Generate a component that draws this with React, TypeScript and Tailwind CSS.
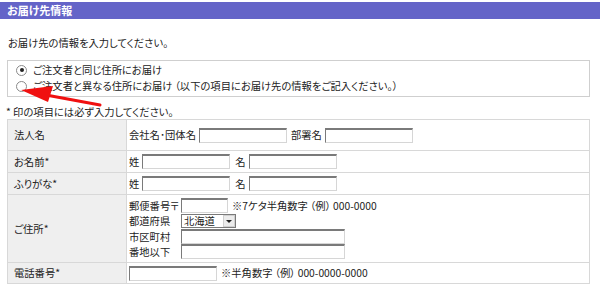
import React from "react";

const inputCls =
  "box-border h-[15px] border border-t-2 border-t-[#7a7a7a] border-l-[#7a7a7a] border-r-[#d6d6d6] border-b-[#d6d6d6] bg-white";

function Input({ w }: { w: string }) {
  return <span className={`${inputCls} inline-block shrink-0 ${w}`} />;
}

function Radio({ checked }: { checked?: boolean }) {
  return (
    <span className="relative inline-block w-[11px] h-[11px] rounded-full border border-[#8a8a8a] bg-white shrink-0">
      {checked && (
        <span className="absolute left-[2.5px] top-[2.5px] w-[4px] h-[4px] rounded-full bg-[#222]" />
      )}
    </span>
  );
}

export default function App() {
  return (
    <div className="relative w-[600px] h-[291px] bg-white overflow-hidden text-[10.3px] text-[#222] whitespace-nowrap [font-family:'Noto_Sans_CJK_JP','Noto_Sans',sans-serif] [font-feature-settings:'palt']">
      <div className="mt-[2px] h-[17px] bg-[#6464c8] pl-[7px] text-white font-bold text-[11px] leading-[17px]">
        お届け先情報
      </div>
      <p className="mt-[16px] ml-[8px] leading-[16px]">お届け先の情報を入力してください。</p>
      <div className="mt-[9px] ml-[7px] w-[583px] border border-[#cfcfcf] pt-[1px] pb-[2px] pl-[8px]">
        <div className="flex items-center gap-[6px] h-[16px]">
          <Radio checked />
          <span>ご注文者と同じ住所にお届け</span>
        </div>
        <div className="flex items-center gap-[6px] h-[16px]">
          <Radio />
          <span>ご注文者と異なる住所にお届け （以下の項目にお届け先の情報をご記入ください。）</span>
        </div>
      </div>
      <p className="mt-[8px] ml-[6px] leading-[14px]">* 印の項目には必ず入力してください。</p>
      <table className="ml-[7px] w-[583px] border-collapse">
        <tbody>
          <tr className="h-[31px]">
            <td className="w-[119px] border border-[#d8d8d8] bg-[#efefef] pl-[6px]">法人名</td>
            <td className="border border-[#d8d8d8] pl-[2px]">
              <div className="flex items-center gap-[3px]">
                <span>会社名･団体名</span>
                <Input w="w-[88px]" />
                <span className="ml-[1px]">部署名</span>
                <Input w="w-[88px]" />
              </div>
            </td>
          </tr>
          <tr className="h-[22px]">
            <td className="border border-[#d8d8d8] bg-[#efefef] pl-[6px]">お名前*</td>
            <td className="border border-[#d8d8d8] pl-[2px]">
              <div className="flex items-center gap-[3px]">
                <span>姓</span>
                <Input w="w-[88px]" />
                <span className="ml-[2px]">名</span>
                <Input w="w-[88px]" />
              </div>
            </td>
          </tr>
          <tr className="h-[22px]">
            <td className="border border-[#d8d8d8] bg-[#efefef] pl-[6px]">ふりがな*</td>
            <td className="border border-[#d8d8d8] pl-[2px]">
              <div className="flex items-center gap-[3px]">
                <span>姓</span>
                <Input w="w-[88px]" />
                <span className="ml-[2px]">名</span>
                <Input w="w-[88px]" />
              </div>
            </td>
          </tr>
          <tr className="h-[67px]">
            <td className="border border-[#d8d8d8] bg-[#efefef] pl-[6px]">ご住所*</td>
            <td className="border border-[#d8d8d8] pl-[2px] py-[3px]">
              <div className="flex items-center h-[15px]">
                <span className="w-[52px] shrink-0">郵便番号〒</span>
                <Input w="w-[47px]" />
                <span className="ml-[4px]">※7ケタ半角数字 （例） 000-0000</span>
              </div>
              <div className="flex items-center h-[16px]">
                <span className="w-[52px] shrink-0">都道府県</span>
                <span className="box-border flex items-center justify-between w-[55px] h-[14px] border border-[#7a7a7a] bg-white pl-[2px]">
                  <span className="leading-[12px]">北海道</span>
                  <span className="box-border flex items-center justify-center w-[12px] h-[12px] border border-[#d0d0d0] bg-[#ececec]">
                    <span className="w-0 h-0 border-l-[3px] border-r-[3px] border-t-[3px] border-l-transparent border-r-transparent border-t-[#222]" />
                  </span>
                </span>
              </div>
              <div className="flex items-center h-[15px]">
                <span className="w-[52px] shrink-0">市区町村</span>
                <Input w="w-[164px]" />
              </div>
              <div className="flex items-center h-[15px]">
                <span className="w-[52px] shrink-0">番地以下</span>
                <Input w="w-[164px]" />
              </div>
            </td>
          </tr>
          <tr className="h-[21px]">
            <td className="border border-[#d8d8d8] bg-[#efefef] pl-[6px]">電話番号*</td>
            <td className="border border-[#d8d8d8] pl-[2px]">
              <div className="flex items-center gap-[4px]">
                <Input w="w-[88px]" />
                <span>※半角数字 （例） 000-0000-0000</span>
              </div>
            </td>
          </tr>
        </tbody>
      </table>
      <svg className="absolute left-0 top-0 pointer-events-none" width="600" height="291" viewBox="0 0 600 291">
        <line x1="100" y1="105" x2="46" y2="95" stroke="#f01010" strokeWidth="3" strokeLinecap="round" />
        <polygon points="21,90 53,86 48,102" fill="#f01010" />
      </svg>
    </div>
  );
}
